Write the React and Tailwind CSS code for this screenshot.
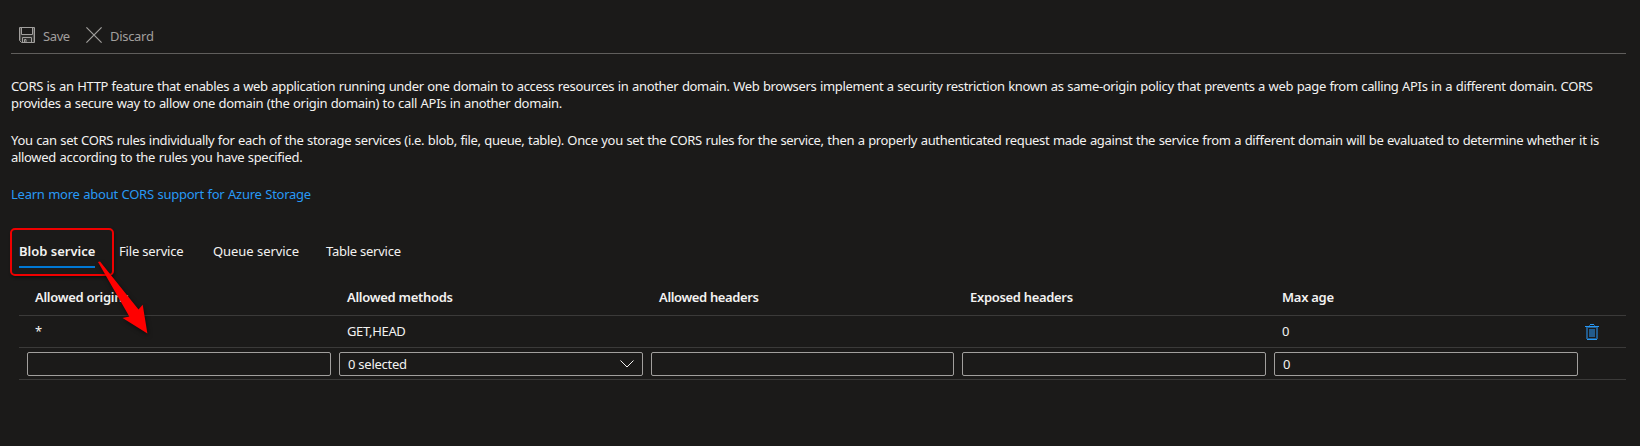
const columns = [
  { label: 'Allowed origins', tracking: 'tracking-[-0.29px]', value: '*' },
  { label: 'Allowed methods', tracking: 'tracking-[-0.29px]', value: 'GET,HEAD' },
  { label: 'Allowed headers', tracking: 'tracking-[-0.36px]', value: '' },
  { label: 'Exposed headers', tracking: 'tracking-[-0.32px]', value: '' },
  { label: 'Max age', tracking: 'tracking-[-0.27px]', value: '0' },
]

const field = 'flex h-6 items-center rounded-[2px] border border-[#a19f9d] px-2'
const rowGrid = 'grid grid-cols-[312px_312px_311px_312px_1fr] border-b border-[#3b3a39]'

function SaveIcon() {
  return (
    <svg className="size-4" viewBox="0 0 16 16" fill="none" stroke="#a19f9d" strokeWidth="1">
      <path d="M1 1h2v7h10V1h2v14H1z" fill="#a19f9d" fillOpacity="0.15" stroke="none" />
      <path d="M.5 .5h15v15H2.500l-2-2z" />
      <path d="M2.500 1v6.500h11V1M3.500 15v-4.500h9V15" />
      <path d="M5.500 12.500h1.500V15M5.500 12.500V15" />
      <path d="M1.500 1v12.500M14.500 1v14" strokeOpacity="0.35" />
    </svg>
  )
}

function DiscardIcon() {
  return (
    <svg className="size-4" viewBox="0 0 16 16" fill="none" stroke="#a19f9d" strokeWidth="1.2">
      <path d="M.4 .4l15.200 15.200M15.600 .4L.4 15.600" />
    </svg>
  )
}

function TrashIcon() {
  return (
    <svg className="mt-px h-4 w-3.5" viewBox="0 0 14 16" shapeRendering="crispEdges">
      <path d="M1 3h12v12H1z" fill="#225b8c" />
      <path d="M3 4h8v10H3z" fill="#1b1a19" />
      <path d="M4 5h6v8H4z" fill="#225b8c" />
      <path d="M4 1h1v1H4zM9 1h1v1H9z" fill="#225b8c" />
      <path d="M0 2h14v1H0zM5 0h4v1H5zM2 15h10v1H2z" fill="#2899f5" />
    </svg>
  )
}

export default function App() {
  return (
    <div className="relative h-[446px] w-[1640px] overflow-hidden bg-[#1b1a19] pl-[11px] pr-3.5 font-['Noto_Sans',sans-serif] text-[13px] leading-[17px] text-[#f3f2f1]">
      <div className="flex h-[54px] items-start border-b border-[#605e5c] pl-2 pt-[27px] text-[#a19f9d]">
        <SaveIcon />
        <span className="ml-2 w-[43px] pt-px tracking-[-0.4px]">Save</span>
        <DiscardIcon />
        <span className="ml-2 pt-px tracking-[-0.3px]">Discard</span>
      </div>

      <p className="mt-6 whitespace-nowrap [word-spacing:0.5px]">
        <span className="block tracking-[-0.336px]">
          CORS is an HTTP feature that enables a web application running under one domain to access resources in another domain. Web browsers implement a security restriction known as same-origin policy that prevents a web page from calling APIs in a different domain. CORS
        </span>
        <span className="block tracking-[-0.32px]">
          provides a secure way to allow one domain (the origin domain) to call APIs in another domain.
        </span>
      </p>
      <p className="mt-5 whitespace-nowrap [word-spacing:0.5px]">
        <span className="block tracking-[-0.331px]">
          You can set CORS rules individually for each of the storage services (i.e. blob, file, queue, table). Once you set the CORS rules for the service, then a properly authenticated request made against the service from a different domain will be evaluated to determine whether it is
        </span>
        <span className="block tracking-[-0.31px]">allowed according to the rules you have specified.</span>
      </p>
      <a className="mt-5 block tracking-[-0.254px] text-[#2899f5] [word-spacing:0.5px]">Learn more about CORS support for Azure Storage</a>

      <nav className="mt-10 flex h-[25px] items-start whitespace-nowrap pl-2">
        <div className="h-[25px] w-[76px] border-b-2 border-[#0078d4] font-semibold">Blob service</div>
        <span className="ml-6 w-[94px] tracking-[-0.18px]">File service</span>
        <span className="w-[113px] tracking-[-0.05px]">Queue service</span>
        <span className="tracking-[-0.25px]">Table service</span>
      </nav>

      <div className="ml-2 mt-[7px]">
        <div className={`${rowGrid} h-[41px] pt-3.5 font-semibold`}>
          {columns.map((c) => (
            <span key={c.label} className={`pl-4 ${c.tracking}`}>{c.label}</span>
          ))}
        </div>
        <div className={`${rowGrid} h-8 pt-[7px]`}>
          {columns.slice(0, 4).map((c) => (
            <span key={c.label} className="pl-4 tracking-[-0.35px]">{c.value}</span>
          ))}
          <div className="flex items-start">
            <span className="w-[319px] pl-4">0</span>
            <TrashIcon />
          </div>
        </div>
        <div className={`${rowGrid} h-8 pl-2 pt-1`}>
          <div className={`${field} w-[304px]`} />
          <div className={`${field} w-[304px] justify-between`}>
            <span className="pt-px tracking-[-0.25px]">0 selected</span>
            <svg className="h-2 w-3.5" viewBox="0 0 14 8" fill="none" stroke="#f3f2f1">
              <path d="M.5 .5L7 7l6.500-6.500" />
            </svg>
          </div>
          <div className={`${field} w-[303px]`} />
          <div className={`${field} w-[304px]`} />
          <div className={`${field} w-[304px]`}>0</div>
        </div>
      </div>

      <div className="absolute left-[10px] top-[228px] h-[48px] w-[104px] rounded-[5px] border-2 border-[#f00000] shadow-[1px_2px_3px_rgba(0,0,0,0.4)]" />
      <svg className="absolute left-[90px] top-[255px] h-[86px] w-[66px] drop-shadow-[1px_2px_2px_rgba(0,0,0,0.5)]" viewBox="90 255 66 86">
        <path d="M98 262L100 261.500L138.500 309.500L142.700 304.800L147.400 333.400L122.600 318L129.300 316.500Z" fill="#ff0000" />
      </svg>
    </div>
  )
}
